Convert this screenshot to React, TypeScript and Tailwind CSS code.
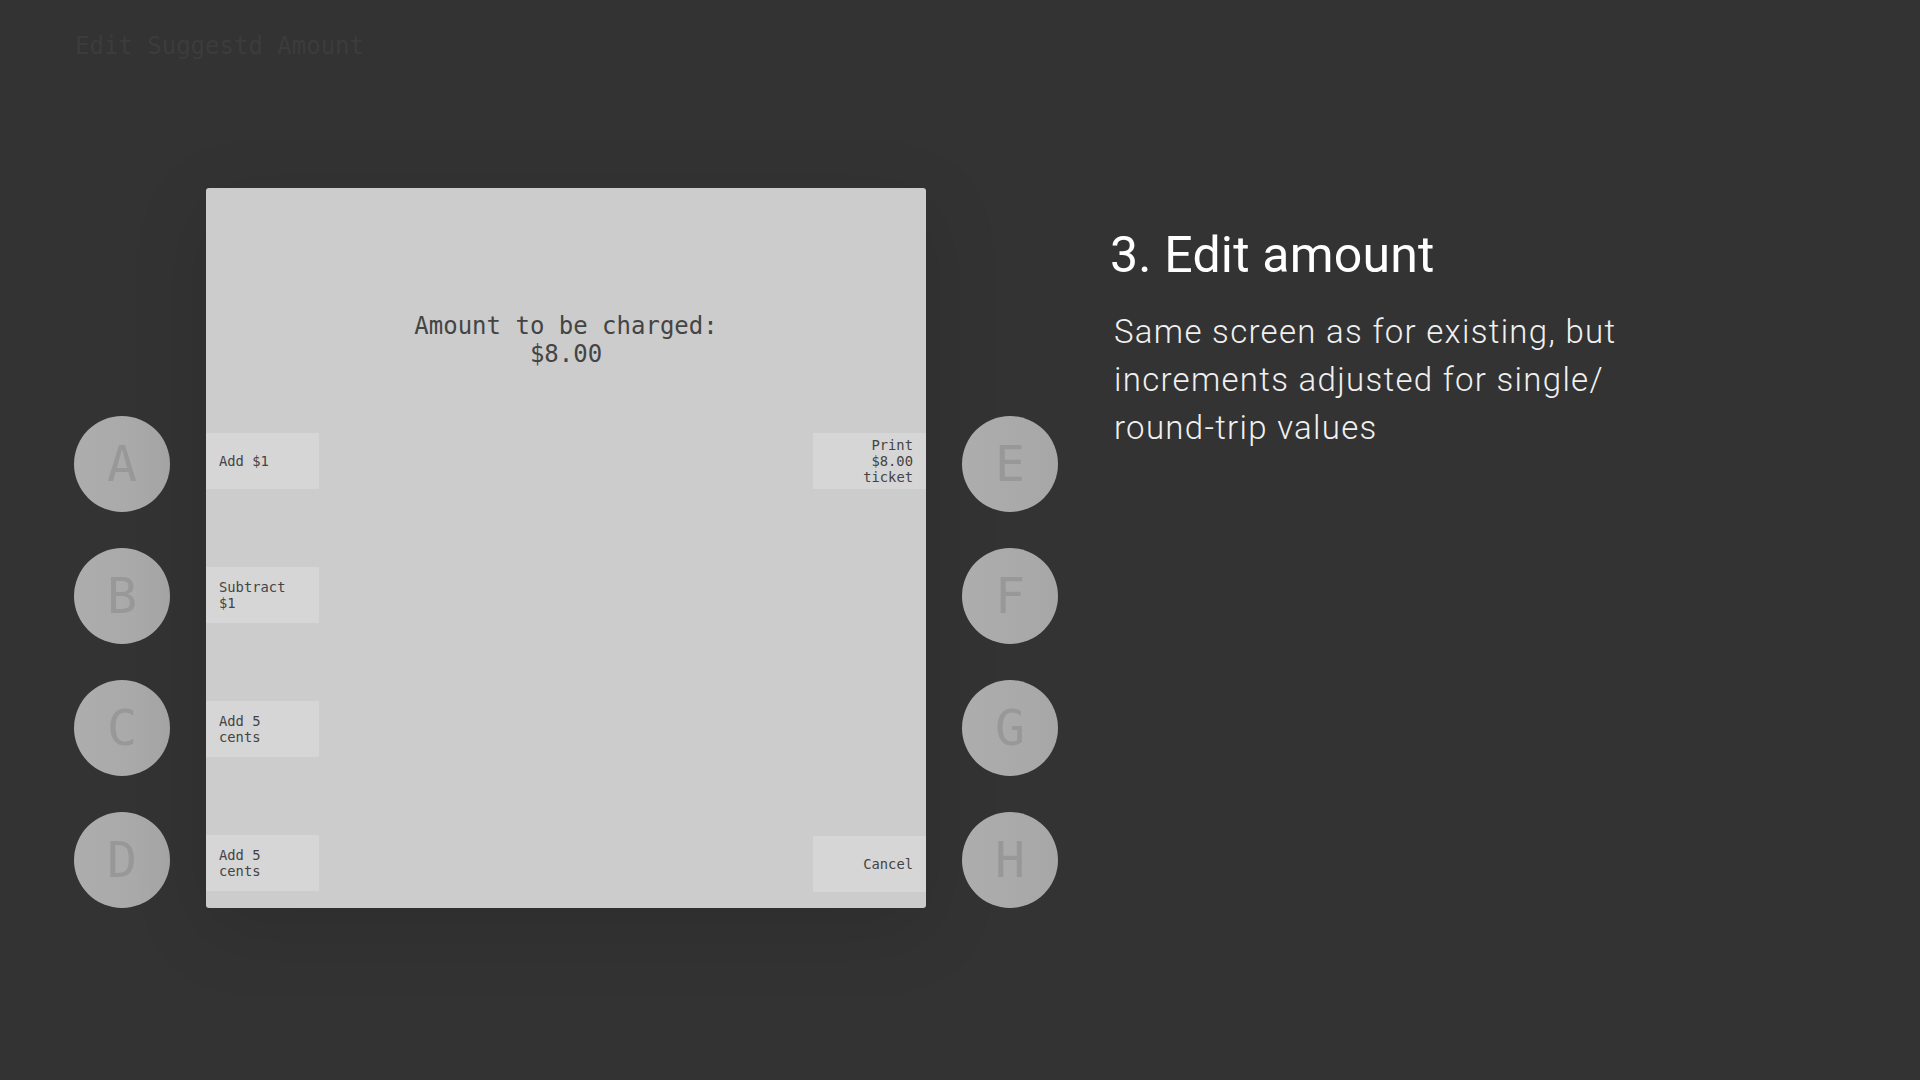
import React from "react";

const mono = { fontFamily: '"DejaVu Sans Mono", "Liberation Mono", monospace' };
const roboto = { fontFamily: 'Roboto, "Noto Sans", sans-serif' };

function Circle({ letter }: { letter: string }) {
  return (
    <div
      className="w-[96px] h-[96px] rounded-full bg-[linear-gradient(90deg,#adadad,#a7a7a7)] flex items-center justify-center text-[50px] leading-none text-[#989898]"
      style={mono}
    >
      {letter}
    </div>
  );
}

function Btn({ lines, right }: { lines: string[]; right?: boolean }) {
  return (
    <div
      className={
        "w-[113px] h-[56px] bg-[#d6d6d6] flex flex-col justify-center text-[13.8px] leading-[16px] text-[#444] " +
        (right ? "items-end pr-[13px] text-right" : "items-start pl-[13px]")
      }
      style={mono}
    >
      {lines.map((l, i) => (
        <div key={i}>{l}</div>
      ))}
    </div>
  );
}

export default function App() {
  return (
    <div className="w-[1920px] h-[1080px] bg-[#333333] overflow-hidden">
      <div className="pt-[32px] pl-[75px] text-[24px] leading-[28px] text-[#3c3c3c]" style={mono}>
        Edit Suggestd Amount
      </div>
      <div className="flex mt-[128px] ml-[74px]">
        <div className="w-[96px] h-[720px] flex flex-col justify-end gap-[36px]">
          <Circle letter="A" />
          <Circle letter="B" />
          <Circle letter="C" />
          <Circle letter="D" />
        </div>
        <div className="ml-[36px] w-[720px] h-[720px] bg-[#cccccc] rounded-[3px] shadow-[0_20px_80px_rgba(0,0,0,0.12)] flex justify-between">
          <div className="flex flex-col pt-[245px] gap-[78px]">
            <Btn lines={["Add $1"]} />
            <Btn lines={["Subtract", "$1"]} />
            <Btn lines={["Add 5", "cents"]} />
            <Btn lines={["Add 5", "cents"]} />
          </div>
          <div className="flex-1 pt-[124px] text-center text-[24px] leading-[28px] text-[#444]" style={mono}>
            <div>Amount to be charged:</div>
            <div>$8.00</div>
          </div>
          <div className="flex flex-col pt-[245px] gap-[347px]">
            <Btn lines={["Print", "$8.00", "ticket"]} right />
            <Btn lines={["Cancel"]} right />
          </div>
        </div>
        <div className="ml-[36px] w-[96px] h-[720px] flex flex-col justify-end gap-[36px]">
          <Circle letter="E" />
          <Circle letter="F" />
          <Circle letter="G" />
          <Circle letter="H" />
        </div>
        <div className="ml-[52px] mt-[39px] w-[560px]" style={roboto}>
          <div className="text-[50px] leading-[56px] tracking-[0.2px] text-white font-normal">3. Edit amount</div>
          <div className="mt-[25px] pl-[4px] text-[33px] leading-[48px] tracking-[1.3px] text-[#f0f0f0] font-light">
            Same screen as for existing, but
            <br />
            increments adjusted for single/
            <br />
            round-trip values
          </div>
        </div>
      </div>
    </div>
  );
}
